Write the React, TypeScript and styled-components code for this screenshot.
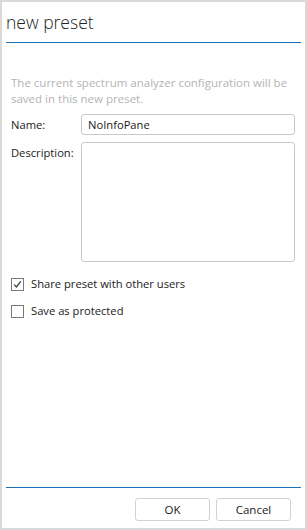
import React from "react";
import styled, { createGlobalStyle } from "styled-components";

const GlobalStyle = createGlobalStyle`
  html, body {
    margin: 0;
    padding: 0;
    background: #ffffff;
  }
  #root {
    width: 307px;
    height: 530px;
  }
`;

const uiFont = `"Segoe UI", "Open Sans", "Noto Sans", sans-serif`;

const Frame = styled.div`
  box-sizing: border-box;
  width: 307px;
  height: 530px;
  border: 2px solid #d9d9d9;
  background: #ffffff;
  display: flex;
  flex-direction: column;
  font-family: ${uiFont};
  color: #1a1a1a;
`;

const Header = styled.div`
  margin: 0 4px;
  height: 40px;
  border-bottom: 1px solid #1e6fb5;
  display: flex;
  align-items: flex-end;
`;

const Title = styled.h1`
  margin: 0 0 11px 0;
  font-family: ${uiFont};
  font-size: 17.5px;
  font-weight: 300;
  line-height: 1;
  color: #222222;
`;

const Body = styled.div`
  flex: 1;
  padding: 32px 9px 0 9px;
  display: flex;
  flex-direction: column;
`;

const Hint = styled.p`
  margin: 0;
  font-size: 11.5px;
  line-height: 16px;
  color: #b4b4b4;
`;

const Form = styled.div`
  margin-top: 7px;
  display: grid;
  grid-template-columns: 70px 214px;
  row-gap: 7px;
`;

const Label = styled.label`
  font-size: 11.2px;
  line-height: 16px;
  padding-top: 3px;
`;

const TextField = styled.div<{ tall?: boolean }>`
  box-sizing: border-box;
  height: ${(p) => (p.tall ? "120px" : "21px")};
  border: 1px solid #c9c9c9;
  border-radius: 3px;
  padding: 2px 6px;
  font-size: 11.2px;
  line-height: 16px;
`;

const Checks = styled.div`
  margin-top: 14px;
  display: flex;
  flex-direction: column;
  gap: 11px;
`;

const CheckRow = styled.label`
  display: flex;
  align-items: center;
  gap: 7px;
  font-size: 11.2px;
  line-height: 16px;
`;

const Box = styled.span`
  box-sizing: border-box;
  width: 13px;
  height: 13px;
  border: 1px solid #7a7a7a;
  background: #ffffff;
  display: flex;
  align-items: center;
  justify-content: center;
`;

const Footer = styled.div`
  margin: 0 4px;
  height: 41px;
  border-top: 1px solid #1e6fb5;
  display: flex;
  justify-content: flex-end;
  align-items: flex-start;
  gap: 6px;
  padding: 10px 10px 0 0;
  box-sizing: border-box;
`;

const Button = styled.button`
  box-sizing: border-box;
  width: 75px;
  height: 23px;
  border: 1px solid #d2d2d2;
  border-radius: 3px;
  background: #ffffff;
  font-family: ${uiFont};
  font-size: 11.5px;
  color: #1a1a1a;
  padding: 0;
`;

const Check: React.FC<{ checked?: boolean; label: string }> = ({ checked, label }) => (
  <CheckRow>
    <Box>
      {checked && (
        <svg width="9" height="9" viewBox="0 0 9 9">
          <path d="M1.2 4.6 L3.4 7 L7.8 1.4" fill="none" stroke="#444" strokeWidth="1.4" />
        </svg>
      )}
    </Box>
    {label}
  </CheckRow>
);

export default function App() {
  return (
    <>
      <GlobalStyle />
      <Frame>
        <Header>
          <Title>new preset</Title>
        </Header>
        <Body>
          <Hint>
            The current spectrum analyzer configuration will be saved in this new preset.
          </Hint>
          <Form>
            <Label>Name:</Label>
            <TextField>NoInfoPane</TextField>
            <Label>Description:</Label>
            <TextField tall />
          </Form>
          <Checks>
            <Check checked label="Share preset with other users" />
            <Check label="Save as protected" />
          </Checks>
        </Body>
        <Footer>
          <Button>OK</Button>
          <Button>Cancel</Button>
        </Footer>
      </Frame>
    </>
  );
}
